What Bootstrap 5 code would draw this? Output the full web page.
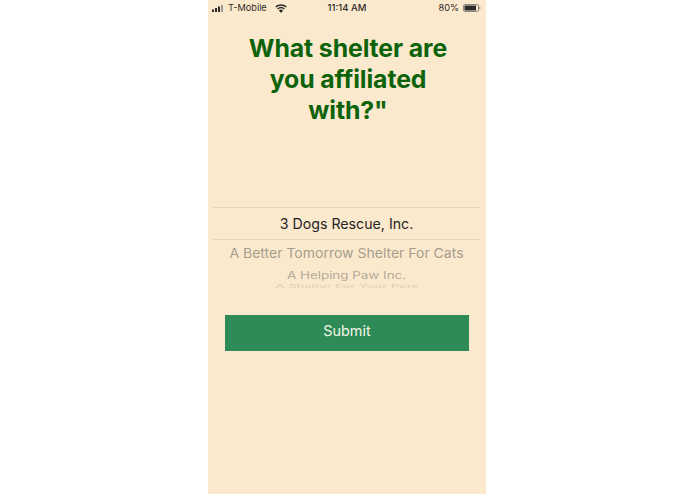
<!DOCTYPE html>
<html lang="en">
<head>
<meta charset="utf-8">
<title>Shelter</title>
<link href="https://cdn.jsdelivr.net/npm/bootstrap@5.3.0/dist/css/bootstrap.min.css" rel="stylesheet">
<style>
html,body{height:100%;background:#fff;margin:0}
body{font-family:Inter,"Liberation Sans",sans-serif;overflow:hidden}
.phone{width:278px;height:494px;margin-left:208px;background:#fbe9ce}
.status{height:15px;padding:1px 5px 0 4px;font-size:9.2px;line-height:14px;color:#2b2a26;position:relative}
.status-time{position:absolute;left:0;right:0;text-align:center;font-weight:500;font-size:9.5px;top:1px}
.question{margin:18px 0 0;height:93px;padding:0 29px 0 31px;text-align:center;font-family:Inter,"Liberation Sans",sans-serif;font-size:24.8px;line-height:30.9px;font-weight:700;color:#0d6309;letter-spacing:-.1px}
.picker{margin:81px 6px 0 5px;height:82px;overflow:hidden;text-align:center;white-space:nowrap}
.pick-sel{height:33px;border-top:1px solid #e3d5bd;border-bottom:1px solid #e3d5bd;font-family:Inter,"Liberation Sans",sans-serif;font-size:14.2px;line-height:31px;color:#26241f}
.pick-a{height:25px;font-size:14px;line-height:25px;color:#a69d8c;transform:scaleY(.93)}
.pick-b{height:15px;margin-top:3px;font-size:13.4px;line-height:15px;color:#b3a998;transform:scaleY(.72)}
.pick-c{height:7px;font-size:13px;line-height:7px;color:#ddd0b9;transform:scaleY(.35)}
.submit-btn{display:block;width:244px;height:36px;margin:26px 0 0 17px;padding:0 0 4px;border:0;border-radius:0;background:#2e8b57;color:#f3f5e6;font-size:14.4px;line-height:28px}
.submit-btn:hover{background:#2e8b57;color:#f3f5e6}
</style>
</head>
<body>
<main class="phone d-flex flex-column">
  <div class="status d-flex justify-content-between align-items-center">
    <div class="status-time">11:14 AM</div>
    <div class="d-flex align-items-center gap-1">
      <svg width="12" height="7" viewBox="0 0 12 7" aria-hidden="true"><rect x="0" y="4.5" width="2" height="2.5" fill="#2b2a26"/><rect x="3" y="3" width="2" height="4" fill="#2b2a26"/><rect x="6" y="1.5" width="2" height="5.5" fill="#2b2a26"/><rect x="9" y="0" width="2" height="7" fill="#a09a8e"/></svg>
      <span>T-Mobile</span>
      <svg class="ms-1" width="12" height="9" viewBox="0 0 12 9" aria-hidden="true"><path d="M6 9 3.9 6.5a3.2 3.2 0 0 1 4.2 0Z" fill="#2b2a26"/><path d="M2.6 5a5.2 5.2 0 0 1 6.8 0M.7 2.9a8.2 8.2 0 0 1 10.6 0" fill="none" stroke="#2b2a26" stroke-width="1.4"/></svg>
    </div>
    <div class="d-flex align-items-center gap-1">
      <span>80%</span>
      <svg width="18" height="8" viewBox="0 0 18 8" aria-hidden="true"><rect x=".5" y=".5" width="15" height="7" rx="1.5" fill="none" stroke="#8d877b"/><rect x="1.5" y="1.5" width="11.5" height="5" fill="#2b2a26"/><rect x="16.3" y="2.7" width="1" height="2.6" fill="#8d877b"/></svg>
    </div>
  </div>
  <h1 class="question">What shelter are you affiliated with?"</h1>
  <div class="picker">
    <div class="pick-sel">3 Dogs Rescue, Inc.</div>
    <div class="pick-a">A Better Tomorrow Shelter For Cats</div>
    <div class="pick-b">A Helping Paw Inc.</div>
    <div class="pick-c">A Shelter For Your Pets</div>
  </div>
  <button type="button" class="btn submit-btn">Submit</button>
</main>
<script src="https://cdn.jsdelivr.net/npm/bootstrap@5.3.0/dist/js/bootstrap.bundle.min.js"></script>
</body>
</html>
